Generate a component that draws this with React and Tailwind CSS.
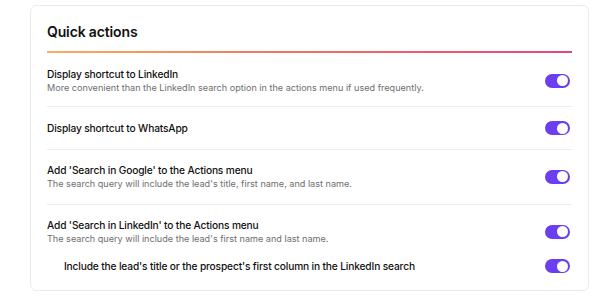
import React from "react";

function Toggle() {
  return (
    <div className="w-[25px] h-[14px] rounded-full bg-[#6b3ff0] flex items-center justify-end pr-[2px] shrink-0">
      <div className="w-[11px] h-[11px] rounded-full bg-white" />
    </div>
  );
}

function Row({ title, desc, border = true, className = "" }) {
  return (
    <div className={`flex items-center justify-between ${border ? "border-b border-[#ececec]" : ""} ${className}`}>
      <div className="flex flex-col">
        <div className="text-[10.2px] leading-[14px] font-medium text-[#111] tracking-[-0.015em]">{title}</div>
        {desc && <div className="text-[9.1px] leading-[13px] text-[#6e6e6e]">{desc}</div>}
      </div>
      <div className="mr-[2px]"><Toggle /></div>
    </div>
  );
}

export default function App() {
  return (
    <div className="w-[600px] h-[304px] bg-white pl-[30px] pr-[11px] pt-[5px]" style={{ fontFamily: "Inter, 'Noto Sans', sans-serif" }}>
      <div className="border border-[#ebebeb] rounded-[6px] h-[286px] px-[16px] pt-[16px]">
        <div className="text-[14px] leading-[20px] font-semibold text-[#111] tracking-[-0.01em]">Quick actions</div>
        <div className="h-[2px] mt-[8.5px] mb-[-0.5px] bg-[linear-gradient(to_right,#f5a84c,#f2624a_45%,#e0336a)] opacity-90" />
        <Row className="pt-[15px] pb-[12px]" title="Display shortcut to LinkedIn" desc="More convenient than the LinkedIn search option in the actions menu if used frequently." />
        <Row className="pt-[14px] pb-[14px]" title="Display shortcut to WhatsApp" />
        <Row className="pt-[13px] pb-[14px]" title="Add 'Search in Google' to the Actions menu" desc="The search query will include the lead's title, first name, and last name." />
        <Row className="pt-[13px] pb-[7px]" border={false} title="Add 'Search in LinkedIn' to the Actions menu" desc="The search query will include the lead's first name and last name." />
        <Row className="pl-[17px] py-[7px]" border={false} title="Include the lead's title or the prospect's first column in the LinkedIn search" />
      </div>
    </div>
  );
}
